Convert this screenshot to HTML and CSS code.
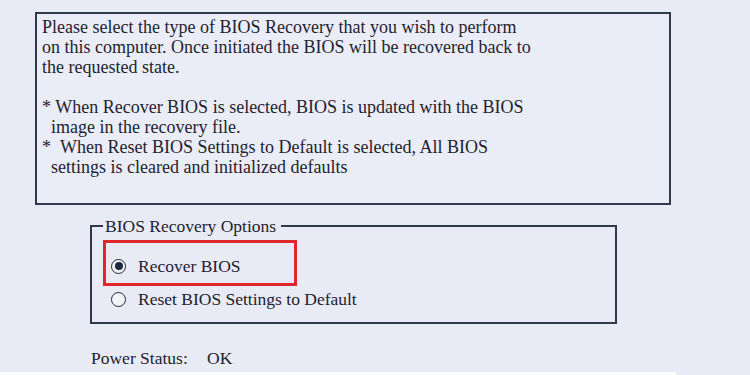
FILE: index.html
```html
<!DOCTYPE html>
<html>
<head>
<meta charset="utf-8">
<link rel="stylesheet" href="styles.css">
</head>
<body>
<div class="screen">
  <div class="content">
    <div class="info">
      <p class="line">Please select the type of BIOS Recovery that you wish to perform</p>
      <p class="line">on this computer. Once initiated the BIOS will be recovered back to</p>
      <p class="line">the requested state.</p>
      <p class="line blank">&nbsp;</p>
      <p class="line">* When Recover BIOS is selected, BIOS is updated with the BIOS</p>
      <p class="line indent">image in the recovery file.</p>
      <p class="line">*&nbsp;&nbsp;When Reset BIOS Settings to Default is selected, All BIOS</p>
      <p class="line indent">settings is cleared and initialized defaults</p>
    </div>
    <fieldset class="options">
      <legend class="legend">BIOS Recovery Options</legend>
      <div class="highlight">
        <div class="row"><span class="radio checked"></span><span class="label">Recover BIOS</span></div>
      </div>
      <div class="row second"><span class="radio"></span><span class="label">Reset BIOS Settings to Default</span></div>
    </fieldset>
    <div class="status"><span class="status-key">Power Status:</span><span>OK</span></div>
  </div>
  <div class="strip-row"><div class="strip"></div></div>
</div>
</body>
</html>
```
FILE: styles.css
```css
html, body {
  margin: 0;
  padding: 0;
}
body {
  background: #e8eaf5;
  font-family: "Liberation Serif", "DejaVu Serif", serif;
  font-size: 17.5px;
  color: #1f2230;
}
.screen {
  width: 750px;
  height: 375px;
  display: flex;
  flex-direction: column;
  overflow: hidden;
}
.content {
  flex: 1;
  padding: 12px 0 0 35px;
}
.info {
  box-sizing: border-box;
  width: 636px;
  height: 193px;
  border: 2px solid #2e3a4a;
  padding: 3px 0 0 5px;
  background: #eaedf7;
  font-size: 18px;
}
.line {
  margin: 0;
  line-height: 20px;
  white-space: nowrap;
}
.indent {
  padding-left: 9px;
}
.options {
  box-sizing: border-box;
  width: 527px;
  margin: 11px 0 0 55px;
  padding: 0 0 13px 11px;
  border: 2px solid #2e3a4a;
}
.legend {
  margin-left: 0;
  padding: 0 5px 0 2px;
  line-height: 20px;
}
.highlight {
  width: 194px;
  box-sizing: border-box;
  border: 3px solid #e0262a;
  margin-top: 4px;
  padding: 13px 0 7px 5px;
}
.row {
  display: flex;
  align-items: center;
  height: 20px;
  line-height: 20px;
}
.row.second {
  margin: 3px 0 0 8px;
}
.radio {
  box-sizing: border-box;
  width: 15px;
  height: 15px;
  border: 1.5px solid #1f2838;
  border-radius: 50%;
  display: flex;
  align-items: center;
  justify-content: center;
  margin-right: 12px;
  background: #f2f4fa;
}
.radio.checked::after {
  content: "";
  width: 8px;
  height: 8px;
  border-radius: 50%;
  background: #1b2a42;
}
.status {
  margin: 24px 0 0 56px;
  line-height: 20px;
  display: flex;
}
.status-key {
  width: 116px;
}
.strip-row {
  height: 3px;
}
.strip {
  width: 676px;
  height: 3px;
  background: #ffffff;
}
```
